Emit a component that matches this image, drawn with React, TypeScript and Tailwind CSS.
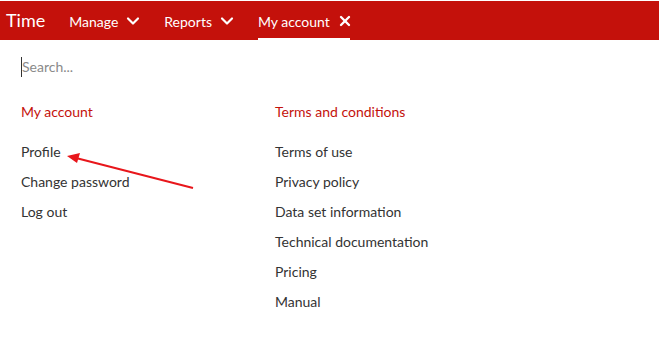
import { ChevronDown, X } from "lucide-react";

const accountLinks = ["Profile", "Change password", "Log out"];
const termsLinks = [
  "Terms of use",
  "Privacy policy",
  "Data set information",
  "Technical documentation",
  "Pricing",
  "Manual",
];

function NavItem({ label, active }: { label: string; active?: boolean }) {
  return (
    <div
      className={`flex h-full items-center text-[14px] text-white ${
        active ? "gap-[7px] border-b-2 border-white pt-[3px]" : "gap-[5px] pt-[1px]"
      }`}
    >
      <span>{label}</span>
      {active ? (
        <X size={16} strokeWidth={3.5} className="-mr-[3px]" />
      ) : (
        <ChevronDown size={20} strokeWidth={2.6} />
      )}
    </div>
  );
}

export default function App() {
  return (
    <div
      className="relative h-[349px] w-[659px] overflow-hidden bg-white"
      style={{ fontFamily: "Lato, 'Open Sans', sans-serif" }}
    >
      {/* Top bar */}
      <div className="mt-px flex h-[39px] items-stretch bg-[#c4110b] pl-[6px]">
        <div className="flex items-center text-[18px] text-white">Time</div>
        <div className="ml-[24px] flex items-stretch gap-[21px]">
          <NavItem label="Manage" />
          <NavItem label="Reports" />
          <NavItem label="My account" active />
        </div>
      </div>

      {/* Menu panel */}
      <div className="px-[21px] pt-[14px]">
        <input
          className="h-[20px] w-[300px] border-l border-[#333] text-[14px] text-[#333] outline-none placeholder:text-[#8a8a8a]"
          placeholder="Search..."
        />

        <div className="mt-[24px] grid grid-cols-[254px_1fr]">
          <div>
            <div className="text-[14px] leading-[20px] text-[#c4110b]">My account</div>
            <ul className="mt-[20px] flex flex-col gap-[10px]">
              {accountLinks.map((l) => (
                <li key={l} className="text-[14px] leading-[20px] text-[#333]">
                  {l}
                </li>
              ))}
            </ul>
          </div>
          <div>
            <div className="text-[14px] leading-[20px] text-[#c4110b]">
              Terms and conditions
            </div>
            <ul className="mt-[20px] flex flex-col gap-[10px]">
              {termsLinks.map((l) => (
                <li key={l} className="text-[14px] leading-[20px] text-[#333]">
                  {l}
                </li>
              ))}
            </ul>
          </div>
        </div>
      </div>

      {/* Annotation arrow */}
      <svg
        className="pointer-events-none absolute left-0 top-0"
        width="659"
        height="349"
      >
        <line x1="193" y1="188" x2="76" y2="158" stroke="#e8161b" strokeWidth="2" />
        <polygon points="67,156 80,153 77,163" fill="#e8161b" />
      </svg>
    </div>
  );
}
